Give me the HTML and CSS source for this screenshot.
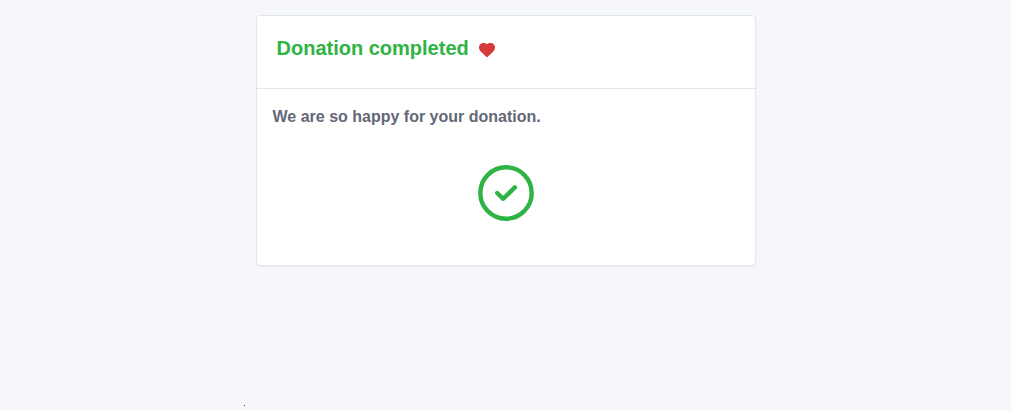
FILE: index.html
```html
<!DOCTYPE html>
<html lang="en">
<head>
<meta charset="utf-8">
<meta name="viewport" content="width=device-width, initial-scale=1">
<title>Donation completed</title>
<link rel="stylesheet" href="styles.css">
</head>
<body>
<main class="page">
  <section class="card">
    <header class="card-header">
      <h1 class="card-title">Donation completed</h1>
      <svg class="heart" viewBox="0 0 16 16" aria-hidden="true">
        <path d="M8 15.4L1.3 8.9C-.5 7-.4 3.9 1.3 2.3C3.1.6 6.2.6 8 2.2C9.8.6 12.9.6 14.7 2.3C16.4 3.9 16.5 7 14.7 8.9Z"/>
      </svg>
    </header>
    <div class="card-body">
      <p class="message">We are so happy for your donation.</p>
      <svg class="check" viewBox="0 0 56 56" role="img" aria-label="Completed">
        <circle cx="28" cy="28" r="25.7"/>
        <path d="M19.2 28L25.2 33.8L36.8 22.4"/>
      </svg>
    </div>
  </section>
  <span class="dot"></span>
</main>
</body>
</html>
```
FILE: styles.css
```css
* {
  box-sizing: border-box;
}

body {
  margin: 0;
  background: #f5f7fb;
  color: #626976;
  font-family: "Liberation Sans", Arial, sans-serif;
  font-size: 16px;
  line-height: 24px;
}

.page {
  display: flex;
  flex-direction: column;
  min-height: 100vh;
  max-width: 532px;
  margin: 0 auto;
  padding: 15px 16px 4px;
}

.card {
  background: #fff;
  border: 1px solid #e2e5e9;
  border-radius: 4px;
  box-shadow: 0 1px 2px rgba(35, 46, 60, 0.05);
}

.card-header {
  display: flex;
  align-items: center;
  gap: 10px;
  padding: 20px 20px 28px;
  border-bottom: 1px solid #e2e5e9;
}

.card-title {
  margin: 0;
  color: #2fb344;
  font-size: 20px;
  line-height: 24px;
}

.heart {
  width: 16px;
  height: 16px;
  margin-top: 4px;
  fill: #d63939;
}

.card-body {
  padding: 16px 16px 44px;
}

.message {
  margin: 0 0 36px;
  font-weight: 700;
}

.check {
  display: block;
  width: 56px;
  height: 56px;
  margin: 0 auto;
  fill: none;
  stroke: #2fb344;
  stroke-width: 4.4;
  stroke-linecap: round;
  stroke-linejoin: round;
}

.dot {
  width: 1px;
  height: 1px;
  margin-top: auto;
  margin-left: -12px;
  background: #444;
}
```
